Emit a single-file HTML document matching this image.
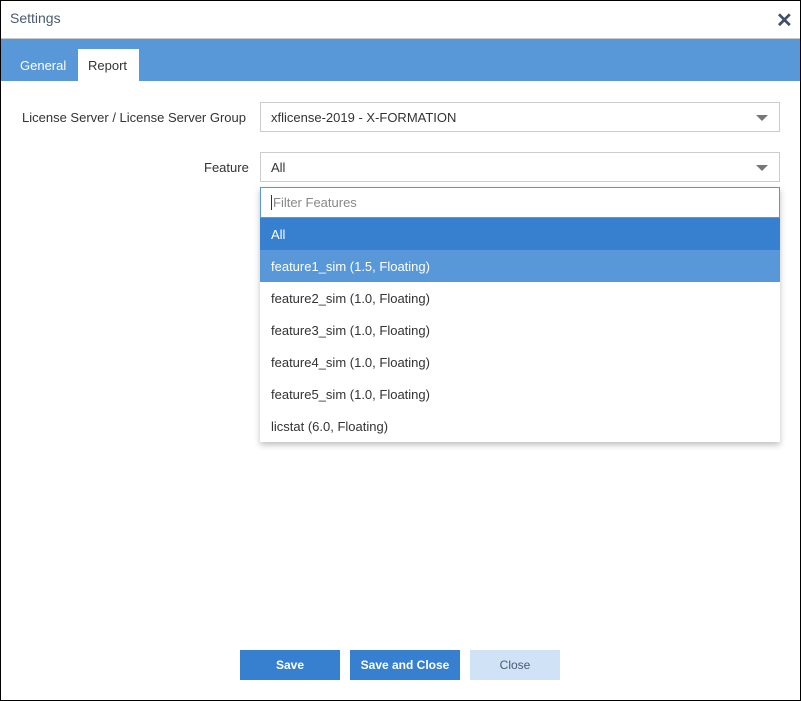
<!DOCTYPE html><html><head><style>
*{box-sizing:border-box;margin:0;padding:0}
body{width:801px;height:701px;font-family:"Liberation Sans",sans-serif;font-size:13px;color:#333;background:#fff;position:relative;overflow:hidden}
.frame{position:absolute;left:0;top:0;width:801px;height:701px;border:1px solid #000}
.title{position:absolute;left:10px;top:10px;font-size:14px;color:#4a5a70}
.x{position:absolute;left:776px;top:8px;font-size:20px;font-weight:bold;color:#3c5068}
.band{position:absolute;left:1px;top:38px;width:799px;height:43px;background:#5897d8;border-top:1px solid #c8c8c8}
.tab{position:absolute;top:58px;font-size:13px;color:#fff}
.tabw{position:absolute;left:78px;top:49px;width:61px;height:32px;background:#fff;font-size:13px;color:#333;padding:9px 0 0 10px}
.lbl{position:absolute;font-size:13px;color:#333}
.sel{position:absolute;left:260px;width:520px;height:30px;border:1px solid #ccc;padding:7px 0 0 10px}
.arr{position:absolute;right:11px;top:12px;width:0;height:0;border-left:6px solid transparent;border-right:6px solid transparent;border-top:6px solid #777}
.dd{position:absolute;left:260px;top:187px;width:520px;height:255px;background:#fff;box-shadow:0 3px 6px rgba(0,0,0,.25)}
.flt{height:31px;border:1px solid #5897d8;padding:7px 0 0 10px;color:#888}
.it{height:32px;padding:9px 0 0 11px;color:#333}
.btn{position:absolute;top:650px;height:30px;font-size:12px;font-weight:bold;color:#fff;background:#3780cf;text-align:center;padding-top:8px}
</style></head><body>
<div class="frame"></div>
<div class="title">Settings</div>
<div class="x">✕</div>
<div class="band"></div>
<div class="tab" style="left:20px">General</div>
<div class="tabw">Report</div>
<div class="lbl" style="left:22px;top:110px">License Server / License Server Group</div>
<div class="sel" style="top:102px">xflicense-2019 - X-FORMATION<div class="arr"></div></div>
<div class="lbl" style="left:204px;top:160px">Feature</div>
<div class="sel" style="top:152px">All<div class="arr"></div></div>
<div class="dd">
<div class="flt"><span style="border-left:1px solid #333;padding-left:1px">Filter Features</span></div>
<div class="it" style="background:#3780cf;color:#fff">All</div>
<div class="it" style="background:#5897d8;color:#fff">feature1_sim (1.5, Floating)</div>
<div class="it">feature2_sim (1.0, Floating)</div>
<div class="it">feature3_sim (1.0, Floating)</div>
<div class="it">feature4_sim (1.0, Floating)</div>
<div class="it">feature5_sim (1.0, Floating)</div>
<div class="it">licstat (6.0, Floating)</div>
</div>
<div class="btn" style="left:240px;width:100px">Save</div>
<div class="btn" style="left:350px;width:110px">Save and Close</div>
<div class="btn" style="left:470px;width:90px;background:#cfe2f6;color:#4a5a70;font-weight:normal">Close</div>
</body></html>
